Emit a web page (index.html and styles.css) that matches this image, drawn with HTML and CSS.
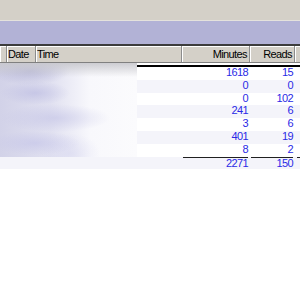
FILE: index.html
```html
<!DOCTYPE html>
<html>
<head>
<meta charset="utf-8">
<link rel="stylesheet" href="styles.css">
</head>
<body>
<div class="toolbar"></div>
<div class="band"></div>
<div class="header">
  <div class="hcell"></div>
  <div class="hcell">Date</div>
  <div class="hcell">Time</div>
  <div class="hcell num">Minutes</div>
  <div class="hcell num">Reads</div>
  <div class="hcell last"></div>
</div>
<div class="body">
  <div class="blur"></div>
  <div class="data">
    <div class="row"><span></span><span class="num">1618</span><span class="num">15</span><span></span></div>
    <div class="row alt"><span></span><span class="num">0</span><span class="num">0</span><span></span></div>
    <div class="row"><span></span><span class="num">0</span><span class="num">102</span><span></span></div>
    <div class="row alt"><span></span><span class="num">241</span><span class="num">6</span><span></span></div>
    <div class="row"><span></span><span class="num">3</span><span class="num">6</span><span></span></div>
    <div class="row alt"><span></span><span class="num">401</span><span class="num">19</span><span></span></div>
    <div class="row"><span></span><span class="num">8</span><span class="num">2</span><span></span></div>
  </div>
</div>
<div class="total">
  <span></span>
  <span class="num tline tmin">2271</span>
  <span class="num tline treads">150</span>
  <span class="tline tlast"></span>
</div>
</body>
</html>
```
FILE: styles.css
```css
html, body {
  margin: 0;
  padding: 0;
  background: #ffffff;
  font-family: "Liberation Sans", Arial, sans-serif;
  font-size: 11px;
  letter-spacing: -0.6px;
}

.toolbar {
  height: 20px;
  background: #d4d0c8;
  border-bottom: 1px solid #e4e2dc;
}

.band {
  height: 23px;
  background: #b2b2d6;
  border-bottom: 2px solid #3c3c3c;
}

.header {
  display: grid;
  grid-template-columns: 7px 29px 146px 68px 45px 1fr;
  height: 16px;
  background: #d4d0c8;
  border-bottom: 1px solid #808080;
  color: #000;
}

.hcell {
  line-height: 17px;
  border-right: 1px solid #8c8c8c;
  box-shadow: inset 1px 0 0 #ffffff, inset 0 1px 0 #ffffff;
  padding-left: 1px;
  white-space: nowrap;
  overflow: hidden;
}

.hcell.num {
  text-align: right;
  padding-right: 2px;
}

.hcell.last {
  border-right: 0;
}

.body {
  display: flex;
  height: 94px;
}

.blur {
  width: 137px;
  flex: none;
  background:
    radial-gradient(ellipse 40px 14px at 30px 8px, rgba(165,165,205,0.55), rgba(165,165,205,0) 100%),
    radial-gradient(ellipse 35px 12px at 35px 30px, rgba(185,185,225,0.6), rgba(185,185,225,0) 100%),
    radial-gradient(ellipse 55px 14px at 55px 55px, rgba(195,195,230,0.6), rgba(195,195,230,0) 100%),
    radial-gradient(ellipse 45px 12px at 35px 80px, rgba(195,195,232,0.6), rgba(195,195,232,0) 100%),
    radial-gradient(ellipse 30px 20px at 70px 90px, rgba(210,210,238,0.5), rgba(210,210,238,0) 100%),
    linear-gradient(to right, #d2d2e8 0px, #e0e0f0 50px, #f8f8fc 90px, #fbfbfd 137px),
    #f4f4fa;
}

.blur::before {
  content: "";
  display: block;
  height: 14px;
  background: linear-gradient(to bottom, rgba(200,200,205,0.9), rgba(220,220,225,0));
}

.data {
  flex: 1;
  padding-top: 2px;
}

.row {
  display: grid;
  grid-template-columns: 45px 68px 45px 1fr;
  height: 12.8px;
  line-height: 11px;
  color: #2a2ae6;
}

.data .row:first-child {
  border-top: 2px solid #000000;
}

.row.alt {
  background: #f4f4fa;
}

.num {
  text-align: right;
  padding-right: 2px;
}

.total {
  display: grid;
  grid-template-columns: 182px 68px 45px 1fr;
  height: 12px;
  background: #f4f4fa;
  color: #2a2ae6;
  line-height: 10px;
}

.tline {
  border-top: 1px solid #202020;
}

.tmin,
.treads {
  margin-left: 1px;
  margin-right: 2px;
  padding-right: 0;
}

.tlast {
  margin-left: 2px;
}
```
